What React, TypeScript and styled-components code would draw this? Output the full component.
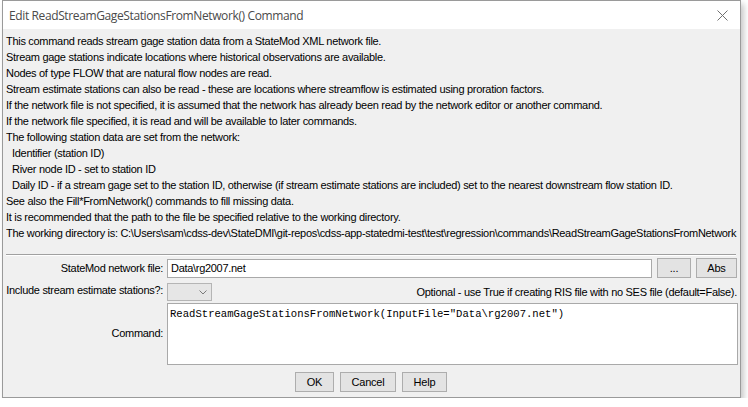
import React from 'react';
import styled, { createGlobalStyle } from 'styled-components';

const GlobalStyle = createGlobalStyle`
  html, body {
    margin: 0;
    padding: 0;
    background: #ffffff;
  }
  body {
    font-family: "Liberation Sans", Arial, sans-serif;
    font-size: 11px;
    color: #000;
  }
`;

const Window = styled.div`
  box-sizing: border-box;
  width: 739px;
  margin-left: 2px;
  border: 1px solid #9a9a9a;
  background: #f0f0f0;
  box-shadow: 3px 4px 6px rgba(0, 0, 0, 0.22);
  display: flex;
  flex-direction: column;
`;

const TitleBar = styled.div`
  height: 28px;
  background: #ffffff;
  display: flex;
  align-items: center;
  justify-content: space-between;
  padding: 0 12px 0 6px;
`;

const Title = styled.span`
  font-family: "Open Sans", "Noto Sans", sans-serif;
  font-size: 12px;
  letter-spacing: -0.38px;
  color: #4a4a4a;
`;

const CloseIcon = styled.svg`
  width: 11px;
  height: 11px;
  display: block;
`;

const Body = styled.div`
  display: flex;
  flex-direction: column;
  padding: 4px 1px 5px 0;
`;

const Description = styled.div`
  display: flex;
  flex-direction: column;
  padding-left: 3px;
`;

const Line = styled.div<{ $indent?: boolean }>`
  height: 16px;
  line-height: 16px;
  white-space: nowrap;
  letter-spacing: -0.3px;
  padding-left: ${(p) => (p.$indent ? '6px' : '0')};
`;

const Separator = styled.div`
  margin: 13px 3px 0 3px;
  height: 1px;
  background: #a0a0a0;
  border-bottom: 1px solid #ffffff;
`;

const Form = styled.div`
  display: grid;
  grid-template-columns: 160px 1fr;
  column-gap: 4px;
  align-items: center;
  padding-top: 2px;
`;

const Label = styled.div`
  text-align: right;
  white-space: nowrap;
  letter-spacing: -0.3px;
  align-self: center;
`;

const FieldRow = styled.div<{ $mt?: number }>`
  display: flex;
  align-items: center;
  gap: 5px;
  padding-right: 2px;
  margin-top: ${(p) => p.$mt ?? 0}px;
`;

const TextField = styled.div`
  flex: 1;
  box-sizing: border-box;
  height: 19px;
  background: #fff;
  border: 1px solid #a9a9a9;
  padding: 0 3px;
  line-height: 17px;
  letter-spacing: -0.3px;
`;

const Button = styled.div<{ $w: number }>`
  box-sizing: border-box;
  width: ${(p) => p.$w}px;
  height: 20px;
  background: #e3e3e3;
  border: 1px solid #adadad;
  display: flex;
  align-items: center;
  justify-content: center;
  letter-spacing: -0.2px;
`;

const Combo = styled.div`
  box-sizing: border-box;
  width: 45px;
  height: 18px;
  background: #e6e6e6;
  border: 1px solid #b5b5b5;
  display: flex;
  align-items: center;
  justify-content: flex-end;
  padding-right: 4px;
`;

const Hint = styled.div`
  margin-left: auto;
  white-space: nowrap;
  letter-spacing: -0.3px;
`;

const CommandArea = styled.div`
  box-sizing: border-box;
  height: 62px;
  margin-top: 2px;
  margin-right: 1px;
  background: #fff;
  border: 1px solid #a9a9a9;
  padding: 3px 2px;
  font-family: "Liberation Mono", "Courier New", monospace;
  font-size: 10.6px;
  line-height: 14px;
  white-space: nowrap;
`;

const ButtonBar = styled.div`
  display: flex;
  justify-content: center;
  gap: 6px;
  margin-top: 7px;
`;

const lines: Array<[string, boolean?]> = [
  ['This command reads stream gage station data from a StateMod XML network file.'],
  ['Stream gage stations indicate locations where historical observations are available.'],
  ['Nodes of type FLOW that are natural flow nodes are read.'],
  ['Stream estimate stations can also be read - these are locations where streamflow is estimated using proration factors.'],
  ['If the network file is not specified, it is assumed that the network has already been read by the network editor or another command.'],
  ['If the network file specified, it is read and will be available to later commands.'],
  ['The following station data are set from the network:'],
  ['Identifier (station ID)', true],
  ['River node ID - set to station ID', true],
  ['Daily ID - if a stream gage set to the station ID, otherwise (if stream estimate stations are included) set to the nearest downstream flow station ID.', true],
  ['See also the Fill*FromNetwork() commands to fill missing data.'],
  ['It is recommended that the path to the file be specified relative to the working directory.'],
  ['The working directory is: C:\\Users\\sam\\cdss-dev\\StateDMI\\git-repos\\cdss-app-statedmi-test\\test\\regression\\commands\\ReadStreamGageStationsFromNetwork'],
];

export default function App() {
  return (
    <>
      <GlobalStyle />
      <Window>
        <TitleBar>
          <Title>Edit ReadStreamGageStationsFromNetwork() Command</Title>
          <CloseIcon viewBox="0 0 11 11">
            <path d="M0.5 0.5 L10.5 10.5 M10.5 0.5 L0.5 10.5" stroke="#707070" strokeWidth="1" />
          </CloseIcon>
        </TitleBar>
        <Body>
          <Description>
            {lines.map(([text, indent], i) => (
              <Line key={i} $indent={indent}>{text}</Line>
            ))}
          </Description>
          <Separator />
          <Form>
            <Label>StateMod network file:</Label>
            <FieldRow>
              <TextField>Data\rg2007.net</TextField>
              <Button $w={34}>...</Button>
              <Button $w={41}>Abs</Button>
            </FieldRow>

            <Label>Include stream estimate stations?:</Label>
            <FieldRow $mt={5}>
              <Combo>
                <svg width="8" height="5" viewBox="0 0 8 5">
                  <path d="M0.5 0.5 L4 4 L7.5 0.5" fill="none" stroke="#7a7a7a" strokeWidth="1" />
                </svg>
              </Combo>
              <Hint>Optional - use True if creating RIS file with no SES file (default=False).</Hint>
            </FieldRow>

            <Label>Command:</Label>
            <CommandArea>
              ReadStreamGageStationsFromNetwork(InputFile="Data\rg2007.net")
            </CommandArea>
          </Form>
          <ButtonBar>
            <Button $w={39}>OK</Button>
            <Button $w={56}>Cancel</Button>
            <Button $w={45}>Help</Button>
          </ButtonBar>
        </Body>
      </Window>
    </>
  );
}
